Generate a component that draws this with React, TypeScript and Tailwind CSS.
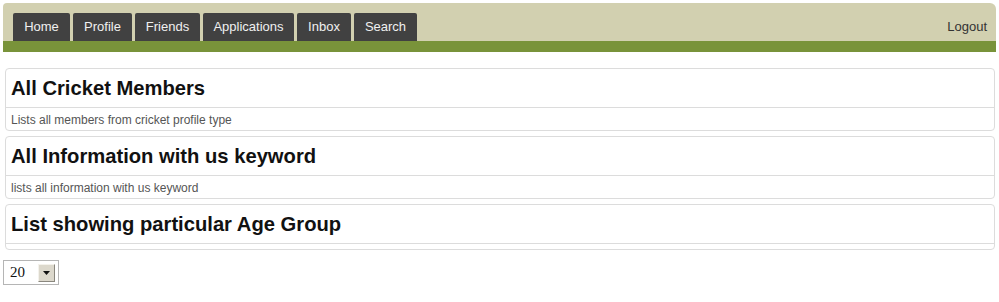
const tabs = [
  { label: "Home", w: "w-[57px]" },
  { label: "Profile", w: "w-[59px]" },
  { label: "Friends", w: "w-[65px]" },
  { label: "Applications", w: "w-[91px]" },
  { label: "Inbox", w: "w-[54px]" },
  { label: "Search", w: "w-[63px]" },
];

const reports = [
  { title: "All Cricket Members", desc: "Lists all members from cricket profile type" },
  { title: "All Information with us keyword", desc: "lists all information with us keyword" },
  { title: "List showing particular Age Group", desc: "" },
];

function ReportCard({ title, desc }: { title: string; desc: string }) {
  return (
    <div className="border border-[#dcdcdc] rounded-[4px]">
      <div className="h-[39px] flex items-center px-[5px] pt-[1px] border-b border-[#dcdcdc]">
        <h2 className="text-[20.2px] font-bold text-[#111]">{title}</h2>
      </div>
      {desc ? (
        <div className="h-[22px] flex items-center px-[5px] pt-[1px] text-[12px] text-[#555]">{desc}</div>
      ) : (
        <div className="h-[5px]" />
      )}
    </div>
  );
}

export default function App() {
  return (
    <div className="bg-white min-h-screen pt-[3px] font-['Liberation_Sans',Arial,sans-serif]">
      {/* top nav */}
      <div className="mx-[3px] h-[38px] bg-[#d2d0b0] rounded-tl-[4px] rounded-tr-[6px] flex items-end justify-between pl-[10px] pr-[9px]">
        <ul className="flex gap-[3px]">
          {tabs.map((t) => (
            <li
              key={t.label}
              className={`${t.w} h-[28px] bg-[#414141] rounded-t-[2px] flex items-center justify-center text-[13px] text-[#f0f0f0]`}
            >
              {t.label}
            </li>
          ))}
        </ul>
        <a className="text-[13px] text-[#333] h-[28px] flex items-center">Logout</a>
      </div>
      <div className="mx-[3px] h-[11px] bg-[#79933a]" />

      <div className="ml-[5px] mr-[4px] mt-[16px] flex flex-col gap-[5px]">
        {reports.map((r) => (
          <ReportCard key={r.title} title={r.title} desc={r.desc} />
        ))}
      </div>

      {/* page size select */}
      <div className="ml-[3px] mt-[10px] w-[56px] h-[25px] border border-[#b5b5b5] flex items-center justify-between pl-[6px] pr-[3px]">
        <span className="font-['Liberation_Serif',serif] text-[15px] text-[#111]">20</span>
        <span className="w-[17px] h-[18px] bg-[#dcd8cc] border border-t-[#f4f2ec] border-l-[#f4f2ec] border-r-[#8a877e] border-b-[#8a877e] flex items-center justify-center">
          <svg width="7" height="4" viewBox="0 0 7 4">
            <path d="M0 0h7L3.5 4z" fill="#111" />
          </svg>
        </span>
      </div>
    </div>
  );
}
